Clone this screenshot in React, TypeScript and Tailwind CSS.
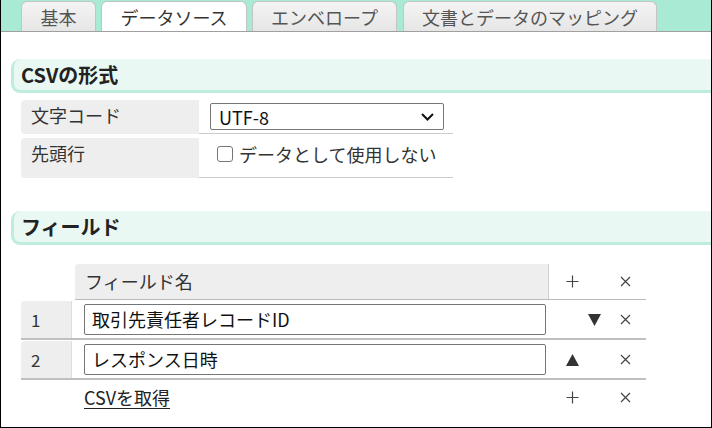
import React from "react";

const FONT = { fontFamily: '"Noto Sans CJK JP", "Noto Sans", sans-serif' };

function Plus() {
  return (
    <svg width="13" height="13" viewBox="0 0 13 13">
      <path d="M6.5 0.5V12.5M0.5 6.5H12.5" stroke="#444" strokeWidth="1.2" fill="none" />
    </svg>
  );
}
function Cross() {
  return (
    <svg width="11" height="11" viewBox="0 0 11 11">
      <path d="M1 1L10 10M10 1L1 10" stroke="#444" strokeWidth="1.2" fill="none" />
    </svg>
  );
}
function Down() {
  return (
    <svg width="13" height="12" viewBox="0 0 13 12">
      <path d="M0 0H13L6.5 12Z" fill="#333" />
    </svg>
  );
}
function Up() {
  return (
    <svg width="13" height="12" viewBox="0 0 13 12">
      <path d="M0 12H13L6.5 0Z" fill="#333" />
    </svg>
  );
}

function SectionHeader({ title }: { title: string }) {
  return (
    <div className="ml-[10px] h-[34px] bg-[#e9f8f3] border-l-[3px] border-b-[3px] border-[#bdeedc] rounded-l-[9px] flex items-center pl-[7px]">
      <span className="text-[20px] font-bold text-[#222] leading-none">{title}</span>
    </div>
  );
}

export default function App() {
  const tab =
    "h-[30px] rounded-t-[6px] border border-b-0 border-[#c4c4c4] flex items-center justify-center text-[18px] leading-none";
  return (
    <div
      style={FONT}
      className="w-[712px] h-[428px] bg-white border-l border-r border-b border-black overflow-hidden text-[#333]"
    >
      <div className="h-[32px] bg-[#a9ead5] border-b border-[#a0a0a0] flex items-end pl-[20px] gap-[5px]">
        <div className={`${tab} w-[75px] bg-gradient-to-b from-[#f4f4f4] to-[#e6e6e6] text-[#555]`}>基本</div>
        <div className={`${tab} w-[146px] bg-white text-[#333]`}>データソース</div>
        <div className={`${tab} w-[145px] bg-gradient-to-b from-[#f4f4f4] to-[#e6e6e6] text-[#555]`}>エンベロープ</div>
        <div className={`${tab} w-[254px] ml-[1px] bg-gradient-to-b from-[#f4f4f4] to-[#e6e6e6] text-[#555]`}>
          文書とデータのマッピング
        </div>
      </div>

      <div className="pt-[27px]">
        <SectionHeader title="CSVの形式" />

        <div className="ml-[20px] mt-[7px] w-[432px] flex flex-col gap-[4px]">
          <div className="flex h-[34px]">
            <div className="w-[178px] bg-[#eeeeee] rounded-l-[4px] pl-[10px] pt-[2px] text-[18px] leading-[26px]">
              文字コード
            </div>
            <div className="flex-1 border-b border-[#cccccc] pl-[11px] pt-[3px]">
              <div className="w-[234px] h-[27px] border border-[#767676] rounded-[2px] flex items-center justify-between pl-[8px] pr-[9px]">
                <span className="text-[18px] leading-none text-[#111]">UTF-8</span>
                <svg width="13" height="8" viewBox="0 0 13 8">
                  <path d="M1 1L6.5 6.5L12 1" stroke="#111" strokeWidth="2" fill="none" />
                </svg>
              </div>
            </div>
          </div>
          <div className="flex h-[40px]">
            <div className="w-[178px] bg-[#eeeeee] rounded-l-[4px] pl-[10px] pt-[2px] text-[18px] leading-[26px]">
              先頭行
            </div>
            <div className="flex-1 border-b border-[#cccccc] pl-[18px] pt-[7px] flex items-start">
              <div className="mt-[1px] w-[16px] h-[16px] border border-[#767676] rounded-[3px] bg-white" />
              <span className="ml-[6px] text-[18px] leading-[18px] text-[#333]">データとして使用しない</span>
            </div>
          </div>
        </div>

        <div className="mt-[33px]">
          <SectionHeader title="フィールド" />
        </div>

        <div className="ml-[20px] mt-[19px] w-[625px] text-[18px]">
          <div className="flex h-[36px] border-b border-[#bbbbbb] ml-[54px]">
            <div className="w-[474px] bg-[#eeeeee] rounded-tl-[4px] border-r border-[#d0d0d0] pl-[10px] flex items-center">
              フィールド名
            </div>
            <div className="w-[49px] flex items-center pl-[17px]"><Plus /></div>
            <div className="w-[48px] flex items-center pl-[22px]"><Cross /></div>
          </div>
          {[
            { n: "1", v: "取引先責任者レコードID", icon: "down" },
            { n: "2", v: "レスポンス日時", icon: "up" },
          ].map((r) => (
            <div key={r.n} className="flex h-[40px] border-b-2 border-[#c0c0c0] pt-[1px]">
              <div className="w-[51px] bg-[#eeeeee] rounded-tl-[4px] border-r border-[#dddddd] pl-[10px] flex items-center text-[17px]">
                {r.n}
              </div>
              <div className="w-[3px]" />
              <div className="w-[474px] pl-[9px] pr-[3px] flex items-center">
                <div className="w-full h-[31px] border border-[#767676] rounded-[2px] flex items-center pl-[7px] text-[#111]">
                  {r.v}
                </div>
              </div>
              <div className={`w-[49px] flex items-center ${r.icon === "up" ? "pl-[17px]" : "justify-end"}`}>
                {r.icon === "up" ? (
                  <Up />
                ) : (
                  <div className="mr-[-3px] flex">
                    <Down />
                  </div>
                )}
              </div>
              <div className="w-[48px] flex items-center pl-[22px]">
                <Cross />
              </div>
            </div>
          ))}
          <div className="flex h-[34px]">
            <div className="w-[54px]" />
            <div className="w-[474px] pl-[9px] flex items-center">
              <span className="underline underline-offset-[3px] text-[#222]">CSVを取得</span>
            </div>
            <div className="w-[49px] flex items-center pl-[17px]"><Plus /></div>
            <div className="w-[48px] flex items-center pl-[22px]"><Cross /></div>
          </div>
        </div>
      </div>
    </div>
  );
}
